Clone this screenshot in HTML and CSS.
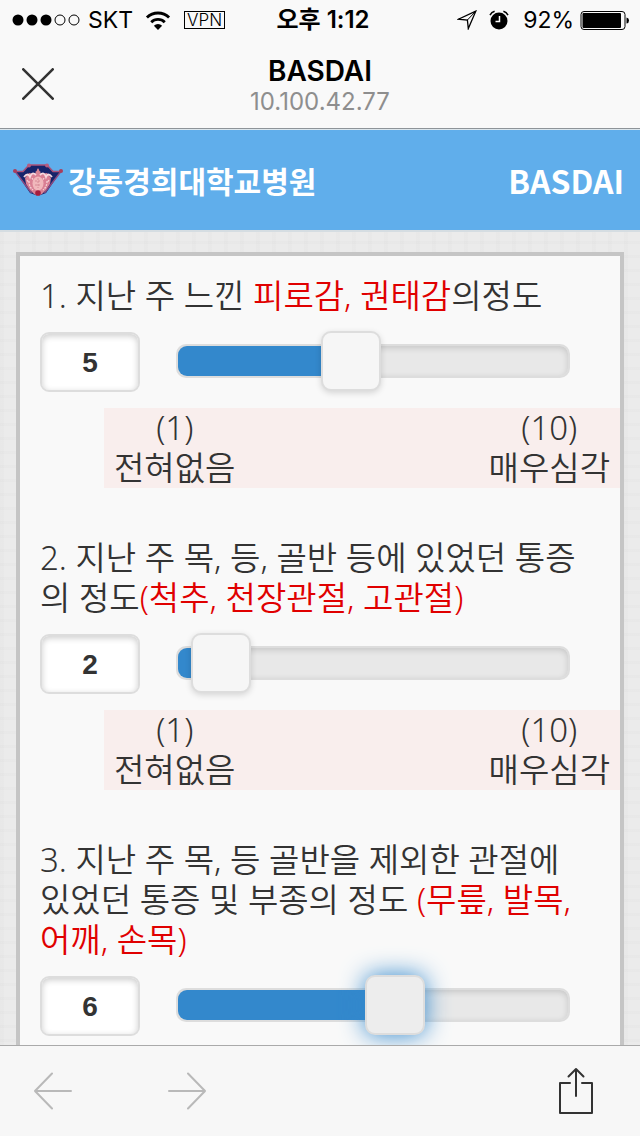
FILE: index.html
```html
<!DOCTYPE html>
<html lang="ko">
<head>
    <meta charset="UTF-8">
    <meta name="viewport" content="width=device-width, initial-scale=1.0">
    <title>BASDAI</title>
    <link rel="stylesheet" href="styles.css">
</head>
<body>
    <div class="status-bar">
        <div class="status-left">
            <svg class="signal" width="68" height="12" viewBox="0 0 68 12">
                <circle cx="6" cy="6" r="5.5"/>
                <circle cx="20" cy="6" r="5.5"/>
                <circle cx="34" cy="6" r="5.5"/>
                <circle cx="48" cy="6" r="5" fill="none" stroke="#000"/>
                <circle cx="62" cy="6" r="5" fill="none" stroke="#000"/>
            </svg>
            <span class="carrier">SKT</span>
            <svg class="wifi" width="26" height="19" viewBox="0 0 24 18">
                <path d="M1.500 6.200a15 15 0 0 1 21 0" fill="none" stroke="#000" stroke-width="2.700"/>
                <path d="M5.600 10.600a9 9 0 0 1 12.800 0" fill="none" stroke="#000" stroke-width="2.700"/>
                <path d="M12 18l-3.900-4a5.600 5.600 0 0 1 7.800 0z"/>
            </svg>
            <span class="vpn">VPN</span>
        </div>
        <div class="status-time">오후 1:12</div>
        <div class="status-right">
            <svg width="20" height="20" viewBox="0 0 20 20">
                <path d="M18.800 1.200L1.400 9.200l9 .8.9 8.600z" fill="none" stroke="#000" stroke-width="1.300"/>
                <path d="M18.800 1.200L10.400 10" stroke="#000" stroke-width="1"/>
            </svg>
            <svg class="alarm" width="20" height="20" viewBox="0 0 20 20">
                <circle cx="10" cy="11" r="8.500"/>
                <path d="M1 5.200A8 8 0 0 1 5.600 1.300M14.400 1.300A8 8 0 0 1 19 5.200" fill="none" stroke="#000" stroke-width="1.500"/>
                <path d="M10.500 6v5.500H6.500" fill="none" stroke="#fff" stroke-width="1.500"/>
            </svg>
            <span class="percent">92%</span>
            <svg width="50" height="20" viewBox="0 0 50 20">
                <rect x="1" y="1.500" width="44" height="18" rx="3" fill="none" stroke="#000"/>
                <rect x="2.500" y="3" width="38.500" height="15" rx="1"/>
                <path d="M46.500 7.500q2.500.5 2.500 3t-2.500 3z"/>
            </svg>
        </div>
    </div>

    <div class="nav-bar">
        <button class="icon-btn" type="button" aria-label="닫기">
            <svg width="32" height="32" viewBox="0 0 32 32" fill="none" stroke="#333" stroke-width="2.600" stroke-linecap="round">
                <path d="M1.300 1.300l29.400 29.400M30.700 1.300L1.300 30.700"/>
            </svg>
        </button>
        <div class="nav-title">
            <div class="page-name">BASDAI</div>
            <div class="page-host">10.100.42.77</div>
        </div>
    </div>

    <main class="content">
        <header class="hospital">
            <svg class="emblem" width="50" height="34" viewBox="0 0 50 34">
                <path d="M16 2h18l6 6.500 8-.5-15 22-8 3-8-3L2 8l8 .5z" fill="#16246b"/>
                <path d="M2 8.500h8L16 2h18l6 6.500h8" fill="none" stroke="#a9527a" stroke-width="1.600"/>
                <path d="M2.500 9l16 21M47.500 9l-16 21" fill="none" stroke="#8b4a80" stroke-width="1.400"/>
                <circle cx="2" cy="8" r="2" fill="#a93d5c"/>
                <circle cx="48" cy="8" r="2" fill="#a93d5c"/>
                <circle cx="16" cy="2.500" r="2" fill="#b45c80"/>
                <circle cx="34" cy="2.500" r="2" fill="#b45c80"/>
                <path d="M25 5l3 6 6-1 4 5-1 6-4 6-4 4-4 2-4-2-4-4-4-6-1-6 4-5 6 1z" fill="#d98094"/>
                <path d="M11 14q4-5 6 0 2-6 6-2M39 14q-4-5-6 0-2-6-6-2" fill="none" stroke="#f8d9df" stroke-width="1.800"/>
                <path d="M16 18q0 6 4 9M34 18q0 6-4 9M19 15l2 3M31 15l-2 3M14 17l2 3M36 17l-2 3" fill="none" stroke="#f3cdd3" stroke-width="1.300" stroke-dasharray="2 1"/>
                <ellipse cx="25" cy="20.500" rx="5.500" ry="7" fill="#f1b8bc"/>
                <path d="M25 6v5M22.500 9h5M22 18h6M22 22h6M25 15v10" fill="none" stroke="#d68a96" stroke-width="1" stroke-dasharray="2 1"/>
                <circle cx="25" cy="30" r="2.800" fill="#a51d3d"/>
            </svg>
            <span class="hospital-name">강동경희대학교병원</span>
            <h1 class="survey-name">BASDAI</h1>
        </header>

        <form class="survey">
            <div class="question">
                <label class="question-text" id="q1-label" for="q1">1. 지난 주 느낀 <span class="point">피로감, 권태감</span>의정도</label>
                <div class="answer">
                    <input class="number" type="number" id="q1" name="q1" min="1" max="10" value="5">
                    <div class="slider">
                        <div class="slider-fill" style="width: 44.44%"></div>
                        <input class="slider-input" type="range" min="1" max="10" value="5" aria-labelledby="q1-label">
                    </div>
                </div>
                <div class="scale">
                    <div>(1)<br>전혀없음</div>
                    <div>(10)<br>매우심각</div>
                </div>
            </div>

            <div class="question">
                <label class="question-text" id="q2-label" for="q2">2. 지난 주 목, 등, 골반 등에 있었던 통증의 정도<span class="point">(척추, 천장관절, 고관절)</span></label>
                <div class="answer">
                    <input class="number" type="number" id="q2" name="q2" min="1" max="10" value="2">
                    <div class="slider">
                        <div class="slider-fill" style="width: 11.11%"></div>
                        <input class="slider-input" type="range" min="1" max="10" value="2" aria-labelledby="q2-label">
                    </div>
                </div>
                <div class="scale">
                    <div>(1)<br>전혀없음</div>
                    <div>(10)<br>매우심각</div>
                </div>
            </div>

            <div class="question">
                <label class="question-text" id="q3-label" for="q3">3. 지난 주 목, 등 골반을 제외한 관절에 있었던 통증 및 부종의 정도 <span class="point">(무릎, 발목, 어깨, 손목)</span></label>
                <div class="answer">
                    <input class="number" type="number" id="q3" name="q3" min="1" max="10" value="6">
                    <div class="slider">
                        <div class="slider-fill" style="width: 55.56%"></div>
                        <input class="slider-input active" type="range" min="1" max="10" value="6" aria-labelledby="q3-label">
                    </div>
                </div>
            </div>
        </form>
    </main>

    <div class="toolbar">
        <button class="icon-btn" type="button" aria-label="뒤로" disabled>
            <svg width="38" height="38" viewBox="0 0 38 38" fill="none" stroke="#b9b9b9" stroke-width="2" stroke-linecap="round" stroke-linejoin="round">
                <path d="M37 19H1M18 1.500L1 19l17 17.500"/>
            </svg>
        </button>
        <button class="icon-btn forward" type="button" aria-label="앞으로" disabled>
            <svg width="38" height="38" viewBox="0 0 38 38" fill="none" stroke="#b9b9b9" stroke-width="2" stroke-linecap="round" stroke-linejoin="round">
                <path d="M1 19h36M20 1.500L37 19 20 36.500"/>
            </svg>
        </button>
        <button class="icon-btn share" type="button" aria-label="공유">
            <svg width="36" height="48" viewBox="0 0 36 48" fill="none" stroke="#333" stroke-width="2" stroke-linecap="round" stroke-linejoin="round">
                <path d="M12 16H2v30h32V16H24M18 29V2M10.500 9.500L18 2l7.500 7.500"/>
            </svg>
        </button>
    </div>
</body>
</html>
```
FILE: styles.css
```css
* {
    box-sizing: border-box;
}
body {
    display: flex;
    flex-direction: column;
    height: 100vh;
    margin: 0;
    background-color: #f9f9f9;
    color: #333;
    font-family: Inter, "Noto Sans CJK KR", sans-serif;
}
.status-bar {
    display: grid;
    grid-template-columns: 1fr auto 1fr;
    align-items: center;
    height: 40px;
    padding: 0 10px 0 12px;
    color: #000;
    font-size: 23px;
    line-height: 40px;
}
.status-left, .status-right {
    display: flex;
    align-items: center;
}
.status-right {
    justify-content: flex-end;
}
.carrier {
    margin: 0 12px 0 8px;
}
.vpn {
    margin-left: 13px;
    padding: 0 2px;
    border: 1px solid #000;
    font-size: 17px;
    font-weight: 300;
    line-height: 16px;
}
.status-time {
    padding-left: 4px;
    font-size: 24px;
    font-weight: 600;
}
.alarm {
    margin: 0 14px 0 12px;
}
.percent {
    margin-right: 6px;
}
.nav-bar {
    display: grid;
    grid-template-columns: 1fr auto 1fr;
    align-items: center;
    height: 89px;
    padding: 0 22px;
    border-bottom: 1px solid #8e9499;
}
.nav-title {
    padding-top: 4px;
    text-align: center;
}
.page-name {
    color: #000;
    font-size: 28px;
    font-weight: 600;
    line-height: 32px;
}
.page-host {
    color: #8e8e8e;
    font-size: 24px;
    line-height: 30px;
}
.icon-btn {
    justify-self: start;
    padding: 0;
    border: none;
    background: none;
}
.icon-btn svg {
    display: block;
}
.content {
    flex: 1;
    min-height: 0;
    overflow: hidden;
    background-color: #ebebeb;
    background-image:
        repeating-linear-gradient(90deg, rgba(0, 0, 0, 0.012) 0 4px, transparent 4px 16px),
        repeating-linear-gradient(rgba(0, 0, 0, 0.012) 0 3px, transparent 3px 14px);
}
.hospital {
    display: flex;
    align-items: center;
    height: 103px;
    padding: 0 16px 0 13px;
    border-top: 1px solid #dce6ec;
    border-bottom: 2px solid #d5dde2;
    background-color: #60aeeb;
    color: #fff;
}
.hospital-name, .survey-name {
    font-family: "Noto Sans CJK KR", sans-serif;
    font-weight: 700;
    line-height: 40px;
}
.hospital-name {
    margin-left: 5px;
    font-size: 30px;
}
.survey-name {
    margin: 0 0 0 auto;
    font-size: 32px;
}
.survey {
    margin: 20px 16px;
    padding: 20px 0;
    border: 4px solid #c5c5c5;
    background-color: #f9f9f9;
}
.question {
    margin-bottom: 50px;
}
.question-text, .scale {
    font-family: "Noto Sans", "Noto Sans CJK KR", sans-serif;
    font-size: 33px;
    font-weight: 350;
    line-height: 40px;
}
.question-text {
    display: block;
    padding: 0 24px 0 20px;
}
.point {
    color: #e00000;
}
.answer {
    display: flex;
    align-items: center;
    gap: 36px;
    margin: 16px 50px 16px 20px;
}
.number {
    width: 100px;
    height: 60px;
    padding: 2px 0 0;
    border: 2px solid #ddd;
    border-radius: 9px;
    background-color: #fff;
    box-shadow: inset 0 2px 6px rgba(0, 0, 0, 0.2);
    color: #333;
    font-family: "Liberation Sans", sans-serif;
    font-size: 28px;
    font-weight: 700;
    text-align: center;
    appearance: textfield;
}
.number::-webkit-inner-spin-button {
    display: none;
}
.slider {
    display: grid;
    flex: 1;
    align-items: center;
    height: 34px;
    margin-bottom: 2px;
    border: 2px solid #ddd;
    border-radius: 10px;
    background-color: #e8e8e8;
    box-shadow: inset 0 2px 6px rgba(0, 0, 0, 0.15);
}
.slider-fill, .slider-input {
    grid-area: 1 / 1;
}
.slider-fill {
    height: 30px;
    border-radius: 9px 0 0 9px;
    background-color: #38c;
}
/* the handle sticks out of the track by half its width on both ends */
.slider-input {
    width: calc(100% + 60px);
    height: 60px;
    margin: -15px -30px;
    background: none;
    appearance: none;
}
.slider-input::-webkit-slider-thumb {
    width: 60px;
    height: 60px;
    border: 2px solid #ddd;
    border-radius: 10px;
    background-color: #f6f6f6;
    box-shadow: 0 2px 6px rgba(0, 0, 0, 0.15);
    appearance: none;
}
.slider-input.active::-webkit-slider-thumb {
    background-color: #ededed;
    box-shadow: 0 0 24px #38c;
}
.scale {
    display: flex;
    justify-content: space-between;
    margin-left: 84px;
    padding: 0 10px;
    background-color: #f9eeed;
    text-align: center;
}
.toolbar {
    display: flex;
    align-items: center;
    height: 91px;
    padding: 0 46px 0 34px;
    border-top: 1px solid #aaa;
    background-color: #f7f7f7;
}
.forward {
    margin-left: 96px;
}
.share {
    margin-left: auto;
}
```
